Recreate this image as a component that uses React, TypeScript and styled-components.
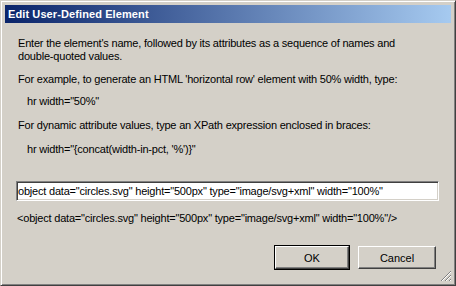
import React from 'react';
import styled, { createGlobalStyle } from 'styled-components';

const GlobalStyle = createGlobalStyle`
  html, body {
    margin: 0;
    padding: 0;
    background: #d4d0c8;
  }
  * {
    box-sizing: border-box;
  }
`;

// Outer dialog frame (classic raised window border)
const Window = styled.div`
  position: relative;
  width: 456px;
  height: 286px;
  background: #d4d0c8;
  border: 1px solid;
  border-color: #d4d0c8 #404040 #404040 #d4d0c8;
  box-shadow: inset 1px 1px #ffffff, inset -1px -1px #808080;
  padding: 4px;
  display: flex;
  flex-direction: column;
  font-family: 'Liberation Sans', Arial, sans-serif;
  font-size: 11px;
  letter-spacing: -0.2px;
  color: #000;
`;

const TitleBar = styled.div`
  height: 18px;
  display: flex;
  align-items: center;
  padding-left: 3px;
  background: linear-gradient(to right, #0a246a, #a6caf0);
  color: #fff;
  font-weight: bold;
  font-size: 11px;
  letter-spacing: 0.1px;
`;

const Body = styled.div`
  flex: 1;
  display: flex;
  flex-direction: column;
  padding: 0 11px;
`;

const Text = styled.div<{ $mt: number; $indent?: number }>`
  margin-top: ${(p) => p.$mt}px;
  padding-left: ${(p) => 2 + (p.$indent || 0)}px;
  line-height: 13px;
  white-space: pre;
`;

const Input = styled.input`
  margin-top: 25px;
  width: 423px;
  height: 20px;
  padding: 0 1px;
  font-family: 'Liberation Sans', Arial, sans-serif;
  font-size: 11px;
  letter-spacing: -0.2px;
  color: #000;
  background: #fff;
  border: 1px solid;
  border-color: #808080 #ffffff #ffffff #808080;
  box-shadow: inset 1px 1px #404040, inset -1px -1px #d4d0c8;
  outline: none;
`;

const ButtonRow = styled.div`
  margin-top: 21px;
  display: flex;
  justify-content: flex-end;
  gap: 9px;
  padding-right: 4px;
`;

const Button = styled.button<{ $w: number; $default?: boolean }>`
  width: ${(p) => p.$w}px;
  height: 23px;
  padding: 0;
  background: #d4d0c8;
  font-family: 'Liberation Sans', Arial, sans-serif;
  font-size: 11px;
  color: #000;
  border: 1px solid;
  border-color: #ffffff #404040 #404040 #ffffff;
  box-shadow: inset -1px -1px #808080;
  outline: ${(p) => (p.$default ? '1px solid #000' : 'none')};
`;

const Grip = styled.svg`
  position: absolute;
  right: 3px;
  bottom: 3px;
`;

const App: React.FC = () => {
  return (
    <>
      <GlobalStyle />
      <Window>
        <TitleBar>Edit User-Defined Element</TitleBar>
        <Body>
          <Text $mt={14}>
            {"Enter the element's name, followed by its attributes as a sequence of names and\ndouble-quoted values."}
          </Text>
          <Text $mt={10}>
            For example, to generate an HTML 'horizontal row' element with 50% width, type:
          </Text>
          <Text $mt={9} $indent={9}>
            hr width="50%"
          </Text>
          <Text $mt={11}>
            For dynamic attribute values, type an XPath expression enclosed in braces:
          </Text>
          <Text $mt={11} $indent={9}>
            {`hr width="{concat(width-in-pct, '%')}"`}
          </Text>
          <Input
            readOnly
            value={'object data="circles.svg" height="500px" type="image/svg+xml" width="100%"'}
          />
          <Text $mt={11} $indent={-1}>
            {'<object data="circles.svg" height="500px" type="image/svg+xml" width="100%"/>'}
          </Text>
          <ButtonRow>
            <Button $w={74} $default>
              OK
            </Button>
            <Button $w={78}>Cancel</Button>
          </ButtonRow>
        </Body>
        <Grip width="12" height="12" viewBox="0 0 12 12">
          <path d="M11 1 L1 11 M11 5 L5 11 M11 9 L9 11" stroke="#808080" strokeWidth="1" />
          <path d="M11 2 L2 11 M11 6 L6 11 M11 10 L10 11" stroke="#ffffff" strokeWidth="1" />
        </Grip>
      </Window>
    </>
  );
};

export default App;
